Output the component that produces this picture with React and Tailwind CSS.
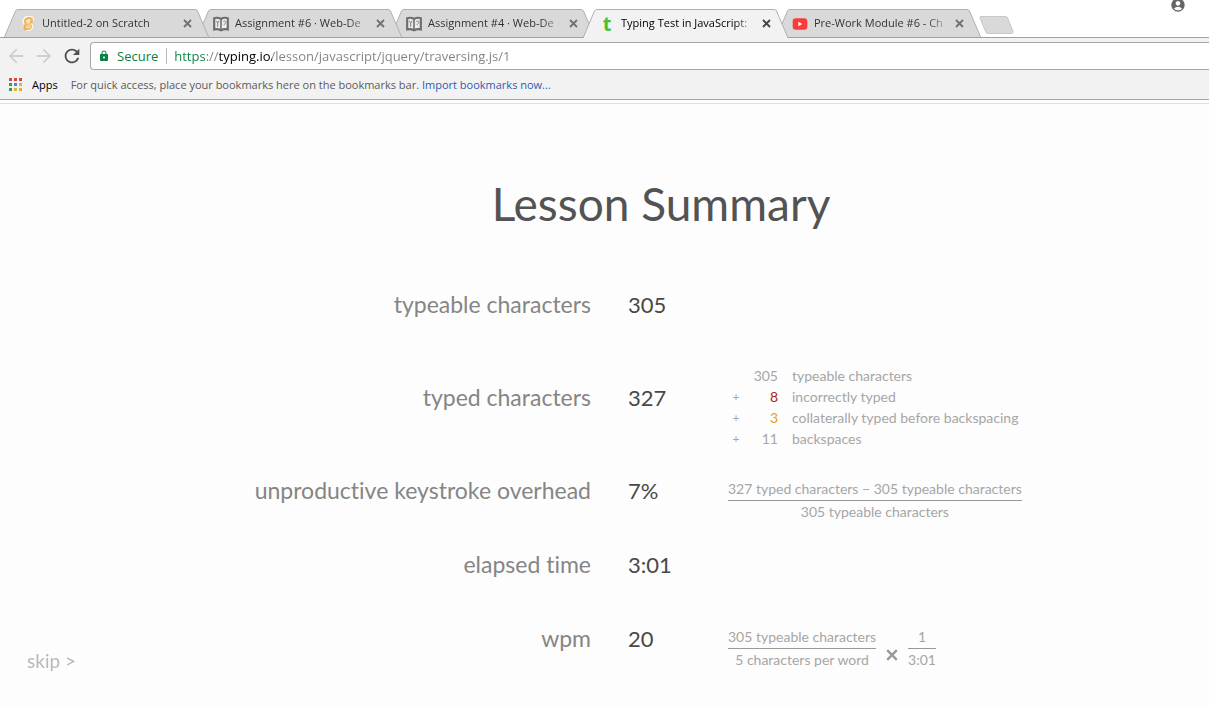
import React from "react";
import {
  MdAccountCircle,
  MdArrowBack,
  MdArrowForward,
  MdLock,
  MdRefresh,
} from "react-icons/md";

function ScratchIcon() {
  return (
    <svg viewBox="0 0 16 16" className="size-4" aria-hidden="true">
      <path
        d="M11.200 3.400C9.600 1.800 5.400 2.600 5.400 5.600c0 2.600 4.800 2.400 4.800 4.600 0 2-3.200 2.600-4.600.8"
        fill="none"
        stroke="#fff6e4"
        strokeWidth="6"
        strokeLinecap="round"
        strokeLinejoin="round"
      />
      <path
        d="M11 3.600C9.600 1.800 5.600 2.600 5.600 5.600c0 2.600 4.800 2.400 4.800 4.600 0 2.200-3.600 2.900-5 1.200M11.200 3v3M5 9.800v3"
        fill="none"
        stroke="#efaf58"
        strokeWidth="3.200"
        strokeLinecap="round"
      />
      <path
        d="M10.600 4.400C9.400 3 6.200 3.600 6.200 5.600c0 2.200 4.200 2.200 4.200 4.600 0 2-3.200 2.400-4.600.8"
        fill="none"
        stroke="#fce6bd"
        strokeWidth="1.100"
        strokeLinecap="round"
      />
    </svg>
  );
}

function BookIcon() {
  return (
    <svg viewBox="0 0 16 16" className="size-4" aria-hidden="true">
      <path
        d="M1.200 2.200C3.400 1.500 6 1.700 8 3c2-1.300 4.600-1.500 6.800-.8v11.200c-2.200-.6-4.600-.4-6.800.9-2.200-1.300-4.600-1.500-6.800-.9z"
        fill="#ededed"
        stroke="#6e6e6e"
        strokeWidth="2.200"
      />
      <path d="M8 3v11" stroke="#6e6e6e" strokeWidth="1.600" />
      <path
        d="M4.700 6.500v4.500M3.700 4.800v1.200c0 .8 2 .8 2 0V4.800M10.300 5.400c1.200-1 2.700-.2 2.400 1.200-.2 1-1.500 1.200-1.600 2.600"
        fill="none"
        stroke="#808080"
        strokeWidth="1"
      />
    </svg>
  );
}

function TypingIcon() {
  return (
    <span
      aria-hidden="true"
      className="flex size-4 items-center justify-center font-['Noto_Sans',sans-serif] text-xl font-bold leading-4 text-[#4cbf35]"
    >
      t
    </span>
  );
}

function VideoIcon() {
  return (
    <svg viewBox="0 0 16 16" className="size-4" aria-hidden="true">
      <rect x="0.700" y="2.300" width="14.600" height="11.400" rx="3" fill="#fb3a3a" />
      <path d="M6.400 5.700v4.600L10.300 8z" fill="#fff" />
    </svg>
  );
}

const tabs = [
  { title: "Untitled-2 on Scratch", Icon: ScratchIcon, layer: "z-40" },
  { title: "Assignment #6 · Web-De", Icon: BookIcon, layer: "z-30" },
  { title: "Assignment #4 · Web-De", Icon: BookIcon, layer: "z-20" },
  { title: "Typing Test in JavaScript:", Icon: TypingIcon, layer: "z-50", active: true },
  { title: "Pre-Work Module #6 - Ch", Icon: VideoIcon, layer: "z-10" },
];

function Tab({ title, Icon, layer, active }) {
  return (
    <div
      className={`relative -mr-3 flex h-[29px] min-w-0 flex-[0_1_205px] items-center pl-4 pr-3.5 ${layer}`}
    >
      <svg
        viewBox="0 0 205 29"
        preserveAspectRatio="none"
        className="absolute inset-0 h-full w-full"
        aria-hidden="true"
      >
        <path
          d="M0 29L11.500 2Q12.200.5 14 .5H191Q192.800.5 193.500 2L205 29Z"
          fill={active ? "#f2f2f2" : "#d9d9d9"}
        />
        <path
          d="M0 29L11.500 2Q12.200.5 14 .5H191Q192.800.5 193.500 2L205 29"
          fill="none"
          stroke="#b0b0b0"
        />
        {!active && <path d="M0 28.500H205" stroke="#a0a0a0" />}
      </svg>
      <button
        type="button"
        role="tab"
        aria-selected={!!active}
        className="relative flex min-w-0 flex-1 items-center gap-1.5 text-left"
      >
        <span className="shrink-0">
          <Icon />
        </span>
        <span
          className={`min-w-0 flex-1 overflow-hidden whitespace-nowrap [mask-image:linear-gradient(to_right,black_calc(100%-24px),transparent)] ${
            active ? "text-black" : "text-[#333]"
          }`}
        >
          {title}
        </span>
      </button>
      <button
        type="button"
        aria-label={`Close ${title}`}
        className={`relative flex size-4 shrink-0 items-center justify-center ${
          active ? "text-[#444]" : "text-[#707070]"
        }`}
      >
        <svg viewBox="0 0 9 9" className="size-[9px]" aria-hidden="true">
          <path d="M1 1l7 7M8 1L1 8" stroke="currentColor" strokeWidth="1.800" />
        </svg>
      </button>
    </div>
  );
}

function AppsIcon() {
  const colors = [
    "#d9483b", "#d9483b", "#d9483b",
    "#2f9e58", "#4285e8", "#e5b02c",
    "#2f9e58", "#e5b02c", "#e5b02c",
  ];
  return (
    <svg viewBox="0 0 14 14" className="size-3.5" aria-hidden="true">
      {colors.map((c, i) => (
        <rect key={i} x={(i % 3) * 5} y={Math.floor(i / 3) * 5} width="3" height="3" fill={c} />
      ))}
    </svg>
  );
}

function Browser() {
  return (
    <header className="font-['Open_Sans','Noto_Sans',sans-serif] text-[11px]">
      <div className="flex h-[38px] items-end border-b border-[#a0a0a0] bg-white pl-1">
        <div role="tablist" className="-mb-px flex min-w-0 flex-1">
          {tabs.map((tab) => (
            <Tab key={tab.title} {...tab} />
          ))}
          <button type="button" aria-label="New tab" className="ml-2.5 mt-[7px] h-[18px] w-9 shrink-0 self-start">
            <svg viewBox="0 0 36 18" className="h-[18px] w-9" aria-hidden="true">
              <path
                d="M2 .5H26Q28 .5 28.700 2L34 15.500Q34.500 17.500 32.500 17.500H9.500Q7.500 17.500 6.800 16L1 2Q.5.5 2 .5Z"
                fill="#d9d9d9"
                stroke="#c8c8c8"
              />
            </svg>
          </button>
        </div>
        <button type="button" aria-label="Profile" className="-mt-[3px] mr-[23px] self-start text-[#666]">
          <MdAccountCircle className="size-4" />
        </button>
      </div>

      <div className="flex items-center bg-[#f2f2f2] pl-[5px] pt-1">
        <nav aria-label="History" className="flex gap-1.5">
          <button type="button" aria-label="Back" className="text-[#d0d0d0]">
            <MdArrowBack className="size-[22px]" />
          </button>
          <button type="button" aria-label="Forward" className="text-[#d0d0d0]">
            <MdArrowForward className="size-[22px]" />
          </button>
          <button type="button" aria-label="Reload" className="text-[#505050]">
            <MdRefresh className="size-[22px]" />
          </button>
        </nav>
        <div className="ml-[7px] flex h-7 min-w-0 flex-1 items-center rounded-l-sm border-y border-l border-[#a6a6a6] bg-white pl-[7px] text-[13px]">
          <MdLock className="size-3 text-[#0b8043]" aria-hidden="true" />
          <label htmlFor="address" className="ml-[7px] border-r border-[#b8b8b8] pr-2 leading-4 text-[#0b8043]">
            Secure
          </label>
          <input
            id="address"
            type="text"
            defaultValue="https://typing.io/lesson/javascript/jquery/traversing.js/1"
            className="ml-[7px] min-w-0 flex-1 bg-[linear-gradient(to_right,#0b8043_32px,#808080_32px_45px,#000_45px_98px,#808080_98px)] bg-clip-text pt-0.5 text-transparent outline-none"
          />
        </div>
      </div>

      <div className="flex h-[30px] items-center border-b border-[#a6a6a6] bg-[#f2f2f2] pl-[9px] pt-px">
        <button type="button" className="flex items-center gap-[9px] text-black">
          <AppsIcon />
          Apps
        </button>
        <p className="ml-[13px] text-[#5a5a5a]">
          For quick access, place your bookmarks here on the bookmarks bar.{" "}
          <a href="#import" className="text-[#2f5bb0]">
            Import bookmarks now...
          </a>
        </p>
      </div>
    </header>
  );
}

function Fraction({ top, bottom }) {
  return (
    <span className="inline-flex flex-col text-center leading-[22px]">
      <span className="border-b border-[#999]">{top}</span>
      <span>{bottom}</span>
    </span>
  );
}

const breakdown = [
  ["", "305", "typeable characters", ""],
  ["+", "8", "incorrectly typed", "text-[#b01c1c]"],
  ["+", "3", "collaterally typed before backspacing", "text-[#e0a020]"],
  ["+", "11", "backspaces", ""],
];

function Breakdown() {
  return (
    <table className="leading-[21px]">
      <tbody>
        {breakdown.map(([sign, count, label, color]) => (
          <tr key={label}>
            <td className="w-4 p-0 text-center text-xs">{sign}</td>
            <td className={`w-[34px] p-0 text-right ${color}`}>{count}</td>
            <td className="p-0 pl-3.5">{label}</td>
          </tr>
        ))}
      </tbody>
    </table>
  );
}

function Row({ label, value, children, tall }) {
  return (
    <div
      className={`grid grid-cols-[591fr_63px_481fr] items-center gap-x-[37px] ${
        tall ? "min-h-28" : "min-h-[74px]"
      }`}
    >
      <dt className="text-right text-[23px] text-[#858585]">{label}</dt>
      <dd className="text-[22px] text-[#484848]">{value}</dd>
      {children && <dd className="pt-5 text-sm text-[#a6a6a6]">{children}</dd>}
    </div>
  );
}

export default function App() {
  return (
    <div className="min-h-screen bg-[#fdfdfd]">
      <Browser />
      <main className="mt-[3px] border-t border-[#dedede] pt-[66px] font-['Lato','Open_Sans',sans-serif] [font-variant-ligatures:none]">
        <h1 className="pl-[113px] text-center text-[46px] leading-[68px] text-[#535353]">Lesson Summary</h1>
        <dl className="mt-[29px]">
          <Row label="typeable characters" value="305" />
          <Row label="typed characters" value="327" tall>
            <Breakdown />
          </Row>
          <Row label="unproductive keystroke overhead" value="7%">
            <Fraction top="327 typed characters − 305 typeable characters" bottom="305 typeable characters" />
          </Row>
          <Row label="elapsed time" value="3:01" />
          <Row label="wpm" value="20">
            <span className="flex items-center">
              <Fraction top="305 typeable characters" bottom="5 characters per word" />
              <svg viewBox="0 0 10 10" className="mx-2.5 mt-3.5 size-3" role="img" aria-label="times">
                <path d="M1 1l8 8M9 1L1 9" stroke="#999" strokeWidth="2" />
              </svg>
              <Fraction top="1" bottom="3:01" />
            </span>
          </Row>
        </dl>
      </main>
      <button type="button" className="fixed bottom-9 left-[27px] font-['Lato','Open_Sans',sans-serif] text-[19px] leading-6 text-[#b8b8b8]">
        skip &gt;
      </button>
    </div>
  );
}
